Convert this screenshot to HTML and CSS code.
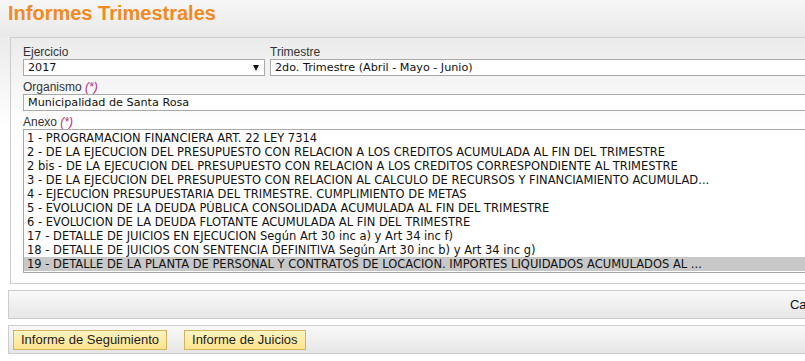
FILE: index.html
```html
<!DOCTYPE html>
<html lang="es">
<head>
<meta charset="UTF-8">
<meta name="viewport" content="width=device-width, initial-scale=1.0">
<title>Informes Trimestrales</title>
<link rel="stylesheet" href="styles.css">
</head>
<body>
<div class="page">
  <div class="head">
    <h1>Informes Trimestrales</h1>
  </div>

  <div class="content">
    <div class="panel">
      <div class="row">
        <div class="field ejercicio">
          <label>Ejercicio</label>
          <div class="select">2017<span class="arrow"></span></div>
        </div>
        <div class="field trimestre">
          <label>Trimestre</label>
          <div class="select">2do. Trimestre (Abril - Mayo - Junio)<span class="arrow"></span></div>
        </div>
      </div>

      <div class="field">
        <label>Organismo <em class="req">(*)</em></label>
        <div class="input">Municipalidad de Santa Rosa</div>
      </div>

      <div class="field">
        <label>Anexo <em class="req">(*)</em></label>
        <div class="listbox">
          <div class="opt">1 - PROGRAMACION FINANCIERA ART. 22 LEY 7314</div>
          <div class="opt">2 - DE LA EJECUCION DEL PRESUPUESTO CON RELACION A LOS CREDITOS ACUMULADA AL FIN DEL TRIMESTRE</div>
          <div class="opt">2 bis - DE LA EJECUCION DEL PRESUPUESTO CON RELACION A LOS CREDITOS CORRESPONDIENTE AL TRIMESTRE</div>
          <div class="opt">3 - DE LA EJECUCION DEL PRESUPUESTO CON RELACION AL CALCULO DE RECURSOS Y FINANCIAMIENTO ACUMULAD...</div>
          <div class="opt">4 - EJECUCION PRESUPUESTARIA DEL TRIMESTRE. CUMPLIMIENTO DE METAS</div>
          <div class="opt">5 - EVOLUCION DE LA DEUDA PÚBLICA CONSOLIDADA ACUMULADA AL FIN DEL TRIMESTRE</div>
          <div class="opt">6 - EVOLUCION DE LA DEUDA FLOTANTE ACUMULADA AL FIN DEL TRIMESTRE</div>
          <div class="opt">17 - DETALLE DE JUICIOS EN EJECUCION Según Art 30 inc a) y Art 34 inc f)</div>
          <div class="opt">18 - DETALLE DE JUICIOS CON SENTENCIA DEFINITIVA Según Art 30 inc b) y Art 34 inc g)</div>
          <div class="opt selected">19 - DETALLE DE LA PLANTA DE PERSONAL Y CONTRATOS DE LOCACION. IMPORTES LIQUIDADOS ACUMULADOS AL ...</div>
        </div>
      </div>
    </div>

    <div class="bar actions">
      <span class="link">Cancelar</span>
    </div>

    <div class="bar">
      <button class="btn">Informe de Seguimiento</button>
      <button class="btn">Informe de Juicios</button>
    </div>
  </div>
</div>
</body>
</html>
```

FILE: styles.css
```css
*{box-sizing:border-box;margin:0;padding:0}
html,body{overflow:hidden}
body{background:#fff;font-family:"Liberation Sans",Arial,sans-serif;color:#222}
.page{width:860px}
.head{height:37px;padding:1px 8px 0;background:linear-gradient(#f6f6f6,#e9e9e9)}
.head h1{font-size:20px;line-height:24px;font-weight:bold;color:#f28a1f}
.content{background:linear-gradient(#ebebeb,#fff 90px)}
.panel{margin-left:10px;border:1px solid #ccc;padding:7px 12px 10px 12px;margin-right:8px}
.row{display:flex;gap:5px}
.field{margin-top:4px}
.row .field{margin-top:0}
.ejercicio{width:242px}
.trimestre{flex:1}
label{display:block;font-size:12px;line-height:14px;color:#333}
.req{color:#c0297f;font-style:italic}
.select,.input{position:relative;height:17px;border:1px solid #aaa;background:#fff;padding:0 4px;font-family:"DejaVu Sans",Verdana,sans-serif;font-size:11.2px;line-height:15px;color:#111;white-space:nowrap}
.arrow{position:absolute;right:5px;top:5px;width:0;height:0;border-left:3.5px solid transparent;border-right:3.5px solid transparent;border-top:6px solid #111}
.listbox{border:1px solid #aaa;background:#fff;padding:1px 0 1px;font-family:"DejaVu Sans",Verdana,sans-serif;font-size:11.5px;color:#111}
.opt{height:14px;line-height:14px;padding:0 3px;white-space:nowrap;overflow:hidden}
.opt.selected{background:#c8c8c8}
.bar{display:flex;align-items:center;gap:17px;height:29px;margin:6px 8px 0;border:1px solid #ccc;padding:0 4px;background:linear-gradient(#f9f9f9,#e6e6e6)}
.actions{justify-content:flex-end;padding-right:9px;font-size:13px;color:#111}
.btn{height:20px;padding:0 7px;border:1px solid #d6b15e;background:linear-gradient(#fff5c2,#fde38c);font-family:"Liberation Sans",Arial,sans-serif;font-size:13px;color:#222;line-height:18px}
```
